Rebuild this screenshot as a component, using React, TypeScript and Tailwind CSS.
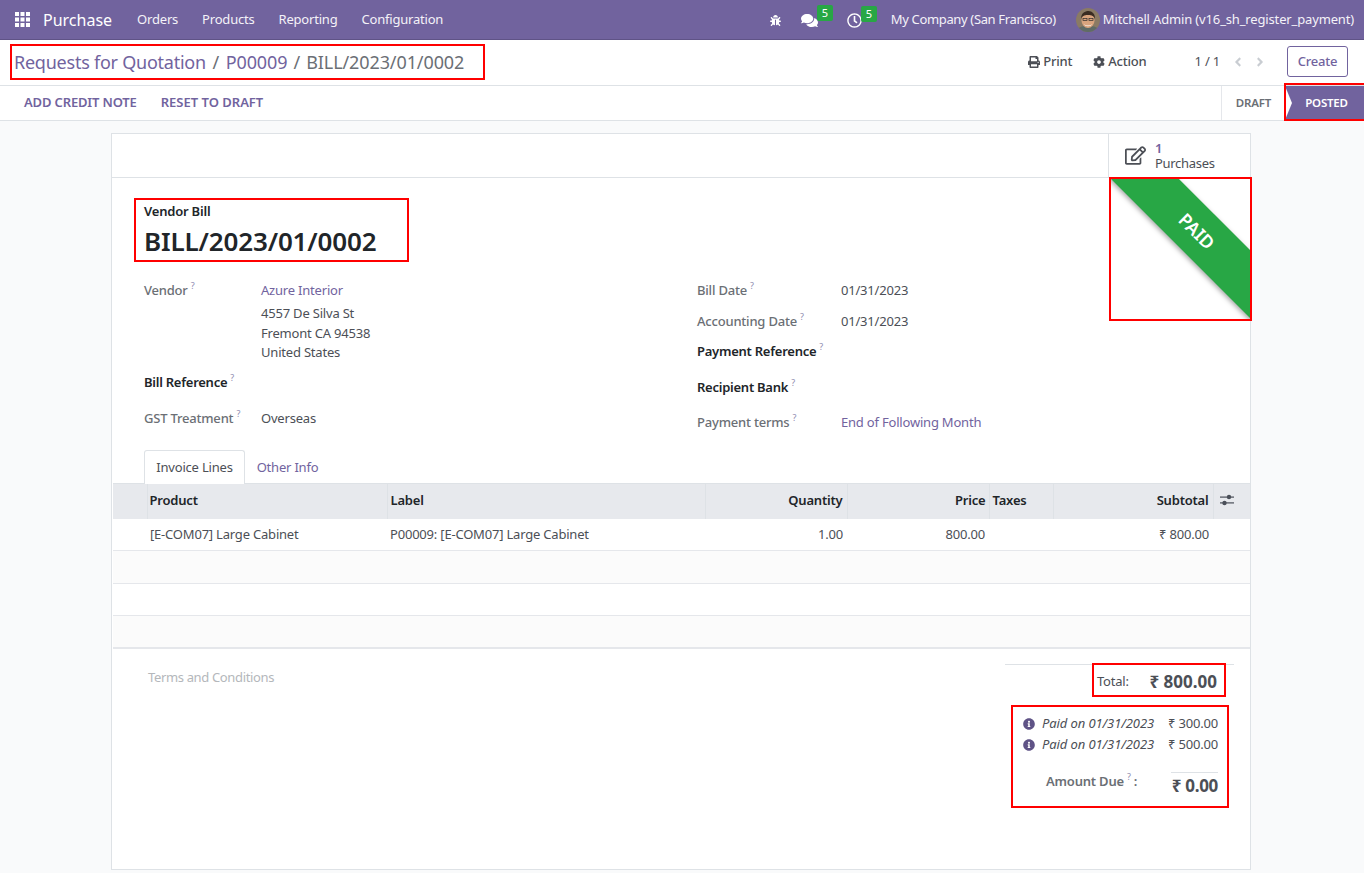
import { FaBug, FaComments, FaRegClock, FaPrint, FaCog, FaRegEdit, FaInfoCircle, FaAngleLeft, FaAngleRight } from "react-icons/fa";

const NAV = ["Orders", "Products", "Reporting", "Configuration"];

function Help() {
  return <sup className="ml-[3px] text-[9px] font-normal text-[#8f8bb0] top-[-6px]">?</sup>;
}

function Avatar() {
  return (
    <svg viewBox="0 0 24 24" className="h-6 w-6 rounded-full">
      <rect width="24" height="24" fill="#8a7a64" />
      <path d="M0 24c1-5 6-6 12-6s11 1 12 6z" fill="#5f6b66" />
      <ellipse cx="12" cy="12.5" rx="6.5" ry="7.5" fill="#d9a47e" />
      <path d="M5 11c0-6 4-8 7.500-8S19.500 6 19 11c-1-3-3-4-7-4s-6 1-7 4z" fill="#3a2c22" />
      <path d="M8 16c2 2 6 2 8 0-1 3-7 3-8 0z" fill="#fff" />
      <rect x="7" y="10.500" width="4" height="2" fill="none" stroke="#2b2b2b" strokeWidth=".7" />
      <rect x="13" y="10.500" width="4" height="2" fill="none" stroke="#2b2b2b" strokeWidth=".7" />
    </svg>
  );
}

function AppsIcon() {
  return (
    <svg viewBox="0 0 15 15" className="h-[15px] w-[15px]" fill="#fff">
      {[0, 5.500, 11].map((y) =>
        [0, 5.500, 11].map((x) => <rect key={`${x}-${y}`} x={x} y={y} width="4" height="4" />),
      )}
    </svg>
  );
}

function SlidersIcon() {
  return (
    <svg viewBox="0 0 14 12" className="h-3 w-[14px]" fill="#4a4f59">
      <rect x="0" y="2.500" width="14" height="1.200" />
      <rect x="0" y="8.300" width="14" height="1.200" />
      <circle cx="9" cy="3" r="2.200" />
      <circle cx="4.500" cy="9" r="2.200" />
    </svg>
  );
}

function Badge() {
  return (
    <span className="absolute -right-[15px] -top-[7px] rounded-[2px] bg-[#28a745] px-[5px] text-[11px] leading-[16px] text-white">
      5
    </span>
  );
}

function Field({ label, bold, children, className, labelWidth }: { label: string; bold?: boolean; children?: React.ReactNode; className?: string; labelWidth: string }) {
  return (
    <div className={`flex leading-[20px] ${className ?? ""}`}>
      <div className={`${labelWidth} shrink-0 whitespace-nowrap ${bold ? "font-semibold tracking-[-0.25px] text-[#212529]" : "font-medium text-[#6b6f75]"}`}>
        {label}
        <Help />
      </div>
      <div>{children}</div>
    </div>
  );
}

export default function App() {
  const left = "w-[117px]";
  const right = "w-[144px]";
  return (
    <div className="flex h-[873px] flex-col overflow-hidden bg-[#f9fafb] text-[13px] text-[#4c4f56] [font-family:'Noto_Sans',sans-serif] tracking-[-0.2px]">
      <header className="flex h-10 shrink-0 items-center border-b border-[#5f5386] bg-[#71639e] text-white">
        <div className="ml-[15px]"><AppsIcon /></div>
        <span className="ml-[13px] text-[16px] tracking-normal">Purchase</span>
        <nav className="ml-[25px] flex gap-[24px] pt-px text-[#f4f2f8]">
          {NAV.map((n) => <span key={n}>{n}</span>)}
        </nav>
        <div className="ml-auto flex items-center pr-[10px] pt-px">
          <FaBug className="h-[11px] w-[11px]" />
          <span className="relative ml-[20px]"><FaComments className="h-[17px] w-[17px]" /><Badge /></span>
          <span className="relative ml-[29px]"><FaRegClock className="h-[15px] w-[15px]" /><Badge /></span>
          <span className="ml-[29px] whitespace-nowrap tracking-[-0.35px] text-[#f4f2f8]">My Company (San Francisco)</span>
          <span className="ml-[20px]"><Avatar /></span>
          <span className="ml-[3px] whitespace-nowrap tracking-[-0.15px] text-[#f4f2f8]">Mitchell Admin (v16_sh_register_payment)</span>
        </div>
      </header>

      <div className="relative flex h-[46px] shrink-0 items-center border-b border-[#dee2e6] bg-white pl-[14px]">
        <div className="whitespace-nowrap text-[18px] tracking-[-0.1px] text-[#71639e]">
          <span className="tracking-[-0.24px]">Requests for Quotation</span> <span className="mx-[2px] text-[#6b6f75]">/</span> P00009 <span className="mx-[1.500px] text-[#6b6f75]">/</span>{" "}
          <span className="text-[#6b6f75]">BILL/2023/01/0002</span>
        </div>
        <div className="ml-auto flex items-center pb-[2px] pr-[16px]">
          <span className="flex items-center gap-[3px] font-medium text-[#4c4f56]"><FaPrint className="h-3 w-3" />Print</span>
          <span className="ml-[21px] flex items-center gap-[3px] font-medium text-[#4c4f56]"><FaCog className="h-3 w-3" />Action</span>
          <span className="ml-[48px]">1 / 1</span>
          <FaAngleLeft className="ml-[11px] h-[14px] w-[14px] text-[#c9cdd2]" />
          <FaAngleRight className="ml-[8px] h-[14px] w-[14px] text-[#c9cdd2]" />
          <button className="ml-[20px] h-[31px] w-[61px] rounded-[3px] border border-[#71639e] font-medium text-[#71639e]">Create</button>
        </div>
        <div className="absolute left-[10px] top-[4px] h-[36px] w-[475px] border-2 border-[#ff0000]" />
      </div>

      <div className="relative flex h-[35px] shrink-0 items-center border-b border-[#dee2e6] bg-white pl-[24px] text-[13px] font-semibold tracking-[-0.15px] text-[#71639e]">
        <span>ADD CREDIT NOTE</span>
        <span className="ml-[24px] tracking-normal">RESET TO DRAFT</span>
        <div className="ml-auto flex h-full text-[11.500px] tracking-[-0.2px]">
          <div className="flex w-[64px] items-center justify-center border-l border-[#e5e7eb] text-[#6b6f75]">DRAFT</div>
          <div className="relative flex w-[79px] items-center justify-center bg-[#71639e] pl-[4px] text-white">
            <svg viewBox="0 0 7 34" className="absolute left-0 top-0 h-full w-[7px]" preserveAspectRatio="none">
              <path d="M0 0 L7 17 L0 34 Z" fill="#fff" />
            </svg>
            POSTED
          </div>
        </div>
        <div className="absolute left-[1284px] top-[-3px] h-[38px] w-[82px] border-2 border-[#ff0000]" />
      </div>

      <main className="flex-1 pt-[12px]">
        <div className="relative ml-[111px] h-[737px] w-[1140px] border border-[#dee2e6] bg-white">
          <div className="flex h-[44px] justify-end border-b border-[#dee2e6]">
            <div className="flex w-[142px] items-center border-l border-[#dee2e6] pl-[16px]">
              <FaRegEdit className="h-[21px] w-[21px] text-[#4c4f56]" />
              <div className="ml-[9px] tracking-[-0.3px]">
                <div className="h-[14px] font-semibold leading-[14px] text-[#71639e]">1</div>
                <div className="mt-px h-[14px] leading-[14px]">Purchases</div>
              </div>
            </div>
          </div>

          <div className="absolute left-[997px] top-[43px] h-[144px] w-[143px] overflow-hidden border-2 border-[#ff0000]">
            <div className="absolute left-[-44px] top-[28px] flex h-[48px] w-[260px] rotate-45 items-center justify-center bg-[#28a745] text-[18px] font-semibold tracking-normal text-white shadow-[0_2px_5px_rgba(0,0,0,0.35)]">
              PAID
            </div>
          </div>

          <div className="relative ml-[22px] mt-[20px] h-[64px] w-[275px] border-2 border-[#ff0000] pl-[8px]">
            <div className="mt-[3px] text-[13px] font-semibold leading-[16px] text-[#212529]">Vendor Bill</div>
            <div className="mt-[5px] text-[26px] font-semibold leading-[34px] tracking-[-0.15px] text-[#212529]">BILL/2023/01/0002</div>
          </div>

          <div className="mt-[18px] flex pl-[32px]">
            <div className="w-[553px]">
              <Field label="Vendor" labelWidth={left}>
                <div className="text-[#71639e]">Azure Interior</div>
                <div className="mt-[4px] leading-[19.500px]">
                  4557 De Silva St<br />Fremont CA 94538<br />United States
                </div>
              </Field>
              <Field label="Bill Reference" bold labelWidth={left} className="mt-[9px]" />
              <Field label="GST Treatment" labelWidth={left} className="mt-[16px]">Overseas</Field>
            </div>
            <div>
              <Field label="Bill Date" labelWidth={right}>01/31/2023</Field>
              <Field label="Accounting Date" labelWidth={right} className="mt-[11px]">01/31/2023</Field>
              <Field label="Payment Reference" bold labelWidth={right} className="mt-[10px]" />
              <Field label="Recipient Bank" bold labelWidth={right} className="mt-[16px]" />
              <Field label="Payment terms" labelWidth={right} className="mt-[15px]"><span className="text-[#71639e]">End of Following Month</span></Field>
            </div>
          </div>

          <div className="mt-[18px] flex h-[33px] pl-[32px]">
            <div className="z-10 flex h-[34px] w-[101px] items-center justify-center rounded-t-[3px] border border-b-0 border-[#dee2e6] bg-white">Invoice Lines</div>
            <div className="flex w-[85px] items-center justify-center pt-[3px] text-[#71639e]">Other Info</div>
          </div>

          <table className="ml-px w-[1137px] table-fixed border-collapse">
            <colgroup>
              <col className="w-[34px]" />
              <col className="w-[240px]" />
              <col className="w-[318px]" />
              <col className="w-[142px]" />
              <col className="w-[142px]" />
              <col className="w-[64px]" />
              <col className="w-[160px]" />
              <col className="w-[37px]" />
            </colgroup>
            <thead>
              <tr className="h-[35px] border-t border-[#dee2e6] bg-[#e7e9ed] font-semibold text-[#212529] [&>th]:border-l [&>th]:border-[#dee2e6] [&>th]:px-[3px] [&>th]:pb-[2px] [&>th]:font-semibold">
                <th className="!border-l-0" />
                <th className="!pl-[2px] text-left">Product</th>
                <th className="text-left">Label</th>
                <th className="!pr-[4px] text-right">Quantity</th>
                <th className="text-right">Price</th>
                <th className="text-left">Taxes</th>
                <th className="!pr-[4px] text-right">Subtotal</th>
                <th><span className="flex pl-[3px]"><SlidersIcon /></span></th>
              </tr>
            </thead>
            <tbody>
              <tr className="h-[32px] border-b border-[#e5e7eb]">
                <td />
                <td className="px-[3px]">[E-COM07] Large Cabinet</td>
                <td className="px-[3px]">P00009: [E-COM07] Large Cabinet</td>
                <td className="pr-[4px] text-right">1.00</td>
                <td className="pr-[4px] text-right">800.00</td>
                <td />
                <td className="pr-[4px] text-right">₹ 800.00</td>
                <td />
              </tr>
              <tr className="h-[33px] border-b border-[#e5e7eb] bg-[#fbfbfb]"><td colSpan={8} /></tr>
              <tr className="h-[32px] border-b border-[#e5e7eb]"><td colSpan={8} /></tr>
              <tr className="h-[32px] border-b-2 border-[#e5e7eb] bg-[#fbfbfb]"><td colSpan={8} /></tr>
            </tbody>
          </table>

          <div className="flex">
            <div className="ml-[36px] mt-[19px] tracking-[-0.35px] text-[#b4b7bb]">Terms and Conditions</div>
            <div className="ml-auto mr-[16px] mt-[15px] w-[229px]">
              <div className="border-t border-[#dee2e6]" />
              <div className="relative flex h-[34px] items-center justify-between pl-[92px] pr-[17px] pt-px">
                <span>Total:</span>
                <span className="text-[17px] font-bold tracking-normal">₹ 800.00</span>
                <div className="absolute left-[87px] top-[-2px] h-[34px] w-[134px] border-2 border-[#ff0000]" />
              </div>
              <div className="relative ml-[6px] mt-[6px] h-[103px] w-[218px] border-2 border-[#ff0000] pr-[9px]">
                <div className="mt-[7px] flex h-[21px] items-center pl-[10px]">
                  <FaInfoCircle className="h-3 w-3 text-[#5f5386]" />
                  <span className="ml-[7px] italic tracking-[-0.1px]">Paid on 01/31/2023</span>
                  <span className="ml-auto">₹ 300.00</span>
                </div>
                <div className="flex h-[21px] items-center pl-[10px]">
                  <FaInfoCircle className="h-3 w-3 text-[#5f5386]" />
                  <span className="ml-[7px] italic tracking-[-0.1px]">Paid on 01/31/2023</span>
                  <span className="ml-auto">₹ 500.00</span>
                </div>
                <div className="mt-[16px] flex">
                  <div className="ml-[33px] whitespace-nowrap font-semibold text-[#6b6f75]">Amount Due<Help /> :</div>
                  <div className="ml-auto flex w-[47px] justify-end whitespace-nowrap border-t border-[#dee2e6] pt-[1px] text-[17px] font-bold leading-[24px] tracking-[-0.3px]">₹ 0.00</div>
                </div>
              </div>
            </div>
          </div>
        </div>
      </main>
    </div>
  );
}
